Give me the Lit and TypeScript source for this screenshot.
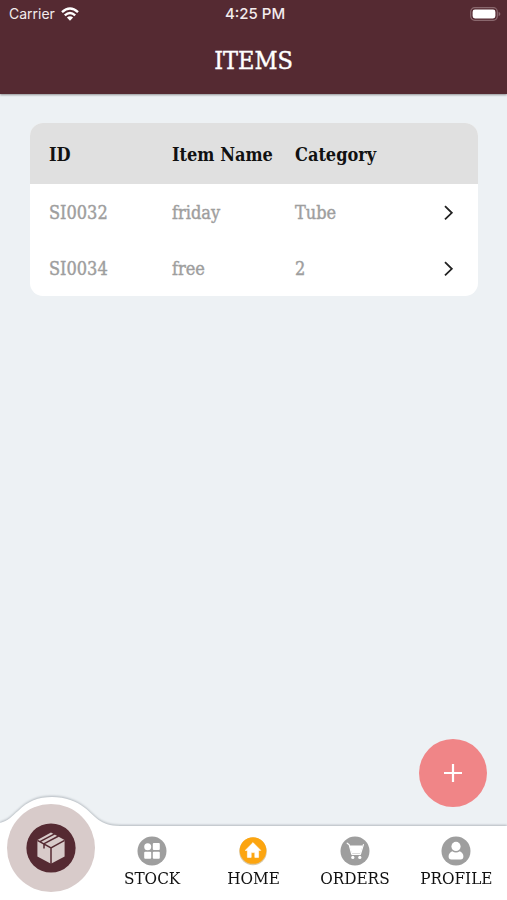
import { LitElement, html, css, svg } from "lit";
import { customElement, state } from "lit/decorators.js";

interface Item {
  id: string;
  name: string;
  category: string;
}

const gridIcon = svg`
  <circle cx="15" cy="15" r="14.5" fill="#9e9e9e"/>
  <circle cx="10.7" cy="10.7" r="3.5" fill="#fff"/>
  <rect x="15.8" y="7" width="7" height="7" rx="1" fill="#fff"/>
  <rect x="7.2" y="15.8" width="7" height="7" rx="1" fill="#fff"/>
  <rect x="15.8" y="15.8" width="7" height="7" rx="1" fill="#fff"/>`;

const homeIcon = svg`
  <circle cx="15" cy="15.4" r="13.8" fill="#d9c9a8"/>
  <circle cx="15" cy="14.5" r="13.3" fill="#fca510"/>
  <path d="M15 6.6 22.8 14.4H20.6V21.4H16.8V16.6H13.2V21.4H9.4V14.4H7.2Z" fill="#fff" stroke="#fff" stroke-width=".6" stroke-linejoin="round"/>`;

const cartIcon = svg`
  <circle cx="15" cy="15" r="14.5" fill="#9e9e9e"/>
  <path d="M7.2 7.2 9.2 8.8 11.8 18.4H20.4L23.4 8.6" fill="none" stroke="#fff" stroke-width="1.2" stroke-linecap="round" stroke-linejoin="round"/>
  <path d="M9.4 9.6H22.6L20.4 17.4H12Z" fill="#fff"/>
  <circle cx="12.8" cy="21.4" r="1.6" fill="#fff"/>
  <circle cx="19.8" cy="21.4" r="1.6" fill="#fff"/>`;

const personIcon = svg`
  <circle cx="15" cy="15" r="14.5" fill="#9e9e9e"/>
  <circle cx="15" cy="10.4" r="4.6" fill="#fff"/>
  <path d="M11.2 15.2Q15 17.8 18.8 15.2Q22.4 17 22.4 20.4Q22.4 23.4 19.6 23.4H10.4Q7.6 23.4 7.6 20.4Q7.6 17 11.2 15.2Z" fill="#fff"/>`;

@customElement("app-root")
export class AppRoot extends LitElement {
  @state() private items: Item[] = [
    { id: "SI0032", name: "friday", category: "Tube" },
    { id: "SI0034", name: "free", category: "2" },
  ];

  private tabs = [
    { label: "STOCK", icon: gridIcon },
    { label: "HOME", icon: homeIcon },
    { label: "ORDERS", icon: cartIcon },
    { label: "PROFILE", icon: personIcon },
  ];

  static styles = css`
    :host {
      display: flex;
      flex-direction: column;
      min-height: 100vh;
      background: #edf1f4;
      font-family: "Roboto Slab", "DejaVu Serif Condensed", "DejaVu Serif", serif;
      color: #111;
    }
    * { box-sizing: border-box; }
    svg { display: block; }
    header {
      background: #552a32;
      color: #fff;
      box-shadow: 0 1px 2px rgba(0, 0, 0, 0.4);
    }
    .status {
      display: grid;
      grid-template-columns: 1fr auto 1fr;
      align-items: center;
      height: 28px;
      padding: 0 6px 0 9px;
      font: 14px/20px Inter, "Liberation Sans", sans-serif;
      color: #f3eced;
    }
    .carrier { display: flex; align-items: center; gap: 6px; }
    .time { font-size: 15px; font-weight: 500; }
    .battery { justify-self: end; }
    h1 {
      margin: 0;
      height: 66px;
      font-size: 25px;
      line-height: 66px;
      font-weight: 500;
      text-align: center;
      -webkit-text-stroke: 0.4px currentColor;
    }
    main { flex: 1; padding: 29px 29px 0 30px; }
    table {
      width: 100%;
      table-layout: fixed;
      border-collapse: collapse;
      background: #fff;
      border-radius: 13px;
      overflow: hidden;
      text-align: left;
      font-size: 18px;
      line-height: 24px;
    }
    th, td { padding: 2px 0 0 19px; white-space: nowrap; }
    th { height: 61px; background: #e0e0e0; font-weight: 700; }
    td {
      height: 56px;
      color: #9e9e9e;
      -webkit-text-stroke: 0.4px currentColor;
    }
    .col { width: 123px; }
    .more {
      display: block;
      margin: 0 18px 0 auto;
      padding: 4px;
      border: 0;
      background: none;
    }
    .add {
      position: fixed;
      right: 20px;
      bottom: 93px;
      width: 68px;
      height: 68px;
      padding: 0;
      border: 0;
      border-radius: 50%;
      background: #f08587;
      display: grid;
      place-items: center;
    }
    nav {
      position: relative;
      background: #fff;
      height: 74px;
      filter: drop-shadow(0 -1px 1px rgba(90, 100, 110, 0.4));
    }
    .bump { position: absolute; left: 0; bottom: 72px; }
    .tabs {
      position: relative;
      display: grid;
      grid-template-columns: repeat(5, 1fr);
      align-items: start;
    }
    a { color: inherit; text-decoration: none; }
    .tab {
      display: flex;
      flex-direction: column;
      align-items: center;
      padding-top: 10px;
      font-size: 17px;
      line-height: 24px;
    }
    .stockroom {
      justify-self: center;
      margin-top: -22px;
      width: 88px;
      height: 88px;
      border-radius: 50%;
      background: #d8cbca;
      display: grid;
      place-items: center;
    }
  `;

  render() {
    return html`
      <header>
        <div class="status">
          <span class="carrier">Carrier
            <svg width="18" height="14" viewBox="0 0 18 14" fill="none" stroke="#fff" stroke-width="2.4">
              <path d="M1 5.2Q9-2.2 17 5.2"/>
              <path d="M3.8 8.3Q9 3.5 14.2 8.3"/>
              <path d="M9 13.8 5.9 10.6Q9 7.9 12.1 10.6Z" fill="#fff" stroke="none"/>
            </svg>
          </span>
          <span class="time">4:25 PM</span>
          <svg class="battery" width="31" height="14" viewBox="0 0 31 14">
            <rect x=".7" y=".7" width="26.6" height="12.6" rx="4" fill="none" stroke="#8a686e" stroke-width="1.2"/>
            <rect x="2.6" y="2.6" width="22.8" height="8.8" rx="2.4" fill="#fff"/>
            <path d="M28.6 4.8Q30.4 5.6 30.4 7T28.6 9.2Z" fill="#8a686e"/>
          </svg>
        </div>
        <h1>ITEMS</h1>
      </header>
      <main>
        <table>
          <colgroup><col class="col"><col class="col"><col class="col"><col></colgroup>
          <thead>
            <tr><th>ID</th><th>Item Name</th><th>Category</th><th></th></tr>
          </thead>
          <tbody>
            ${this.items.map((item) => html`
              <tr>
                <td>${item.id}</td>
                <td>${item.name}</td>
                <td>${item.category}</td>
                <td>
                  <button class="more" aria-label="Open ${item.id}">
                    <svg width="14" height="16" viewBox="0 0 14 16" fill="none" stroke="#222" stroke-width="1.8">
                      <path d="M3 1.2 9.8 7.8 3 14.4"/>
                    </svg>
                  </button>
                </td>
              </tr>`)}
          </tbody>
        </table>
      </main>
      <button class="add" aria-label="Add item">
        <svg width="18" height="18" viewBox="0 0 18 18" stroke="#fff" stroke-width="2.2">
          <path d="M9 0V18M0 9H18"/>
        </svg>
      </button>
      <nav>
        <svg class="bump" width="120" height="32" viewBox="0 0 120 32">
          <path d="M0 27C8 25 12 20 18 15C28 5 38 1 52 1C66 1 76 5 85 12C94 19 100 30 120 30V32H0Z" fill="#fff"/>
        </svg>
        <div class="tabs">
          <a class="stockroom" href="#items" aria-label="Items">
            <svg width="50" height="50" viewBox="0 0 50 50">
              <circle cx="25" cy="25" r="24.6" fill="#552a32"/>
              <path d="M25 9.6 38.6 17V33.4L25 40.8 11.4 33.4V17Z" fill="#d8cbca"/>
              <path d="M11.4 17.4 25 25 38.6 17.4M25 25V41M14.4 18.4 28.6 10.8M18.2 20.6 32.6 13M18 20.4V25.4" fill="none" stroke="#552a32" stroke-width="1.5"/>
            </svg>
          </a>
          ${this.tabs.map((tab) => html`
            <a class="tab" href="#${tab.label.toLowerCase()}">
              <svg width="30" height="30" viewBox="0 0 30 30">${tab.icon}</svg>
              <span>${tab.label}</span>
            </a>`)}
        </div>
      </nav>
    `;
  }
}
